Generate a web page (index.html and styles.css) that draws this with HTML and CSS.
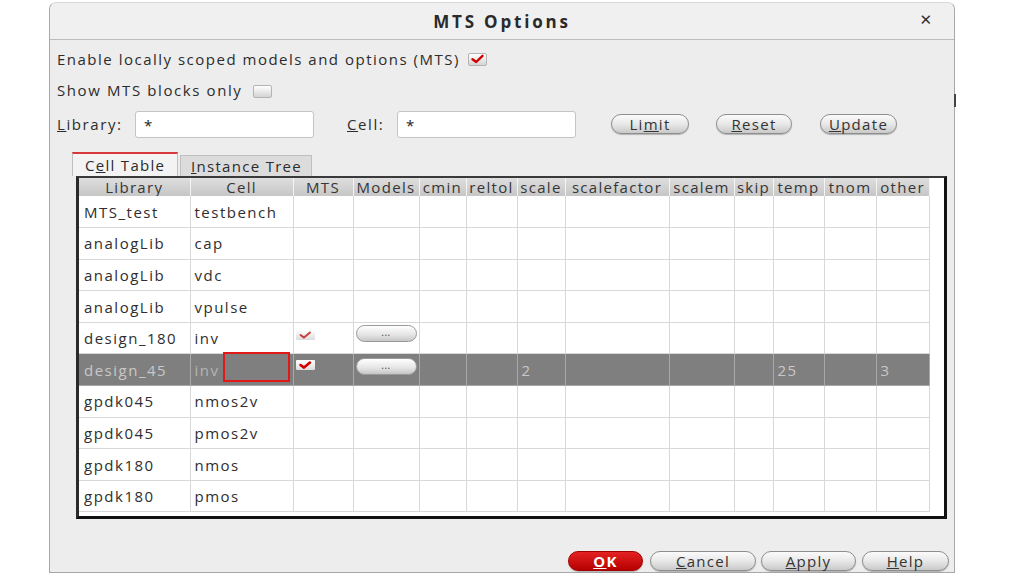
FILE: index.html
```html
<!DOCTYPE html>
<html>
<head>
<meta charset="utf-8">
<title>MTS Options</title>
<link rel="stylesheet" href="styles.css">
</head>
<body>
<div class="dialog">
  <div class="titlebar">
    <span class="title">MTS Options</span>
    <span class="close">&#x2715;</span>
  </div>
  <div class="content">
    <div class="row row-enable">
      <span class="label">Enable locally scoped models and options (MTS)</span>
      <span class="check checked"><svg viewBox="0 0 17 12" width="17" height="12"><path d="M3.5 6.2 L7.2 9 L13.5 2.8" fill="none" stroke="#d40000" stroke-width="2.4" stroke-linecap="round" stroke-linejoin="round"/></svg></span>
    </div>
    <div class="row row-show">
      <span class="label">Show MTS blocks only</span>
      <span class="check"></span>
    </div>
    <div class="row row-filter">
      <span class="label lib-label"><u>L</u>ibrary:</span>
      <span class="input lib-input">*</span>
      <span class="label cell-label"><u>C</u>ell:</span>
      <span class="input cell-input">*</span>
      <span class="btn btn-limit">Li<u>m</u>it</span>
      <span class="btn btn-reset"><u>R</u>eset</span>
      <span class="btn btn-update"><u>U</u>pdate</span>
    </div>
    <div class="tabs">
      <span class="tab active">C<u>e</u>ll Table</span>
      <span class="tab"><u>I</u>nstance Tree</span>
    </div>
    <div class="frame">
      <table class="grid">
        <colgroup>
          <col style="width:111px"><col style="width:103px"><col style="width:60px"><col style="width:66px"><col style="width:47px"><col style="width:51px"><col style="width:48px"><col style="width:104px"><col style="width:65px"><col style="width:39px"><col style="width:51px"><col style="width:52px"><col style="width:53px">
        </colgroup>
        <thead>
          <tr><th>Library</th><th>Cell</th><th>MTS</th><th>Models</th><th>cmin</th><th>reltol</th><th>scale</th><th>scalefactor</th><th>scalem</th><th>skip</th><th>temp</th><th>tnom</th><th>other</th></tr>
        </thead>
        <tbody>
          <tr><td>MTS_test</td><td>testbench</td><td></td><td></td><td></td><td></td><td></td><td></td><td></td><td></td><td></td><td></td><td></td></tr>
          <tr><td>analogLib</td><td>cap</td><td></td><td></td><td></td><td></td><td></td><td></td><td></td><td></td><td></td><td></td><td></td></tr>
          <tr><td>analogLib</td><td>vdc</td><td></td><td></td><td></td><td></td><td></td><td></td><td></td><td></td><td></td><td></td><td></td></tr>
          <tr><td>analogLib</td><td>vpulse</td><td></td><td></td><td></td><td></td><td></td><td></td><td></td><td></td><td></td><td></td><td></td></tr>
          <tr><td>design_180</td><td>inv</td><td class="mts"><span class="mini-check"><svg viewBox="0 0 19 10" width="19" height="10"><path d="M4.5 5 L8 7.6 L14 2.6" fill="none" stroke="#c84040" stroke-width="2" stroke-linecap="round" stroke-linejoin="round"/></svg></span></td><td class="models"><span class="dots">...</span></td><td></td><td></td><td></td><td></td><td></td><td></td><td></td><td></td><td></td></tr>
          <tr class="selected"><td>design_45</td><td class="cell-edit">inv<span class="editor"></span></td><td class="mts"><span class="mini-check strong"><svg viewBox="0 0 19 10" width="19" height="10"><path d="M4.5 5 L8 7.6 L14 2.6" fill="none" stroke="#d40000" stroke-width="2.6" stroke-linecap="round" stroke-linejoin="round"/></svg></span></td><td class="models"><span class="dots">...</span></td><td></td><td></td><td>2</td><td></td><td></td><td></td><td>25</td><td></td><td>3</td></tr>
          <tr><td>gpdk045</td><td>nmos2v</td><td></td><td></td><td></td><td></td><td></td><td></td><td></td><td></td><td></td><td></td><td></td></tr>
          <tr><td>gpdk045</td><td>pmos2v</td><td></td><td></td><td></td><td></td><td></td><td></td><td></td><td></td><td></td><td></td><td></td></tr>
          <tr><td>gpdk180</td><td>nmos</td><td></td><td></td><td></td><td></td><td></td><td></td><td></td><td></td><td></td><td></td><td></td></tr>
          <tr><td>gpdk180</td><td>pmos</td><td></td><td></td><td></td><td></td><td></td><td></td><td></td><td></td><td></td><td></td><td></td></tr>
        </tbody>
      </table>
    </div>
    <div class="footer">
      <span class="btn btn-ok"><u>O</u>K</span>
      <span class="btn btn-cancel"><u>C</u>ancel</span>
      <span class="btn btn-apply"><u>A</u>pply</span>
      <span class="btn btn-help"><u>H</u>elp</span>
    </div>
  </div>
  <span class="edge-mark"></span>
</div>
</body>
</html>
```

FILE: styles.css
```css
html, body {
  margin: 0;
  padding: 0;
  background: #ffffff;
}

body {
  font-family: "Open Sans", "DejaVu Sans", sans-serif;
  font-size: 15px;
  color: #2c2c2c;
}

.dialog {
  position: relative;
  box-sizing: border-box;
  margin: 2px 0 0 49px;
  width: 906px;
  height: 571px;
  background: #ededed;
  border: 1px solid #a8a8a8;
  border-top-color: #d8d8d8;
  border-radius: 7px 7px 0 0;
}

.titlebar {
  box-sizing: border-box;
  height: 37px;
  display: flex;
  align-items: center;
  justify-content: center;
  position: relative;
  background: #f0f0f0;
  border-bottom: 1px solid #bdbdbd;
  border-radius: 7px 7px 0 0;
}

.title {
  font-weight: 700;
  font-size: 17px;
  letter-spacing: 2.8px;
  color: #2a2a2a;
}

.close {
  position: absolute;
  right: 22px;
  top: 8px;
  font-size: 15px;
  font-weight: 700;
  color: #333;
  font-family: "DejaVu Sans", sans-serif;
  letter-spacing: 0;
}

.content {
  padding: 0 0 0 7px;
}

.row {
  display: flex;
  align-items: center;
  letter-spacing: 1.6px;
}

.row-enable {
  height: 20px;
  margin-top: 9px;
  letter-spacing: 1.5px;
}

.row-show {
  height: 20px;
  margin-top: 11px;
}

.row-filter {
  height: 28px;
  margin-top: 10px;
}

.check {
  display: inline-flex;
  align-items: center;
  justify-content: center;
  box-sizing: border-box;
  width: 19px;
  height: 13px;
  margin-left: 8px;
  background: linear-gradient(#ffffff, #d4d4d4);
  border: 1px solid #b4b4b4;
  border-radius: 2px;
}

.row-show .check {
  margin-left: 11px;
  margin-top: 3px;
}

.lib-label { width: 78px; }

.input {
  box-sizing: border-box;
  height: 27px;
  background: #ffffff;
  border: 1px solid #c4c4c4;
  border-radius: 3px;
  padding: 3px 0 0 8px;
  color: #222;
  letter-spacing: 0;
}

.lib-input { width: 179px; }

.cell-label {
  margin-left: 33px;
  width: 50px;
}

.cell-input { width: 179px; }

.btn {
  display: inline-flex;
  align-items: center;
  justify-content: center;
  box-sizing: border-box;
  height: 20px;
  border-radius: 10px;
  border: 1px solid #8e8e8e;
  background: linear-gradient(#fbfbfb 0%, #e8e8e8 50%, #c9c9c9 100%);
  box-shadow: 0 1px 1px rgba(0,0,0,0.25);
  color: #333;
  font-size: 15px;
  letter-spacing: 1.3px;
}

.btn-limit { width: 78px; margin-left: 35px; }
.btn-reset { width: 76px; margin-left: 27px; }
.btn-update { width: 77px; margin-left: 28px; }

.tabs {
  display: flex;
  align-items: flex-end;
  height: 24px;
  margin-top: 14px;
  padding-left: 15px;
}

.tab {
  box-sizing: border-box;
  display: inline-flex;
  align-items: center;
  height: 21px;
  padding: 0 0 0 10px;
  width: 132px;
  margin-left: 2px;
  background: #dcdcdc;
  border: 1px solid #c0c0c0;
  border-bottom: none;
  letter-spacing: 1.3px;
  font-size: 15px;
}

.tab.active {
  height: 24px;
  width: 106px;
  margin-left: 0;
  padding-left: 12px;
  background: #f3f3f3;
  border-top: 2px solid #d9383a;
}

.frame {
  box-sizing: border-box;
  margin-left: 19px;
  width: 871px;
  height: 343px;
  background: #ffffff;
  border-top: 2px solid #3a3a3a;
  border-left: 3px solid #2a2a2a;
  border-right: 3px solid #111111;
  border-bottom: 3px solid #111111;
}

.grid {
  border-collapse: collapse;
  table-layout: fixed;
  width: 849px;
  letter-spacing: 1.5px;
}

.grid thead tr {
  height: 18px;
}

.grid th {
  padding: 0;
  font-weight: 400;
  font-size: 15px;
  color: #363636;
  background: linear-gradient(#dedede, #c6c6c6);
  border-right: 1px solid #f4f4f4;
  text-align: center;
  line-height: 18px;
  white-space: nowrap;
  overflow: hidden;
  letter-spacing: 1.3px;
}

.grid tbody tr {
  height: 31.6px;
}

.grid td {
  padding: 0 0 0 4px;
  border: 1px solid #d8d8d8;
  border-top: none;
  line-height: 28px;
  font-size: 15px;
  color: #2e2e2e;
  white-space: nowrap;
  overflow: hidden;
  position: relative;
}

.grid td:first-child {
  border-left: none;
  padding-left: 5px;
}

.grid tr.selected td {
  background: #7f7f7f;
  color: #c8c8c8;
  border-color: #a8a8a8;
}

.grid tr.selected td.cell-edit {
  color: #b4b4b4;
  overflow: visible;
}

.grid td.mts,
.grid td.models {
  vertical-align: top;
  padding: 0 0 0 2px;
}

.mini-check {
  display: flex;
  align-items: center;
  justify-content: center;
  width: 19px;
  height: 10px;
  margin-top: 7px;
  background: linear-gradient(#ffffff, #dcdcdc);
  border-radius: 1px;
}

.mini-check.strong {
  margin-top: 6px;
}

.dots {
  display: flex;
  align-items: center;
  justify-content: center;
  box-sizing: border-box;
  width: 61px;
  height: 17px;
  margin-top: 2px;
  border-radius: 9px;
  border: 1px solid #9a9a9a;
  background: linear-gradient(#ffffff, #e4e4e4 60%, #c6c6c6);
  color: #444;
  font-size: 10px;
  letter-spacing: 0.5px;
  line-height: 10px;
  padding-bottom: 3px;
}

.grid tr.selected td.models .dots {
  margin-top: 4px;
}

.editor {
  position: absolute;
  left: 32px;
  top: -2px;
  width: 67px;
  height: 30px;
  box-sizing: border-box;
  border: 2px solid #e01818;
}

.footer {
  display: flex;
  justify-content: flex-end;
  margin-top: 32px;
  padding-right: 5px;
}

.footer .btn {
  height: 20px;
}

.btn-ok {
  width: 75px;
  background: linear-gradient(#e42222, #b60000);
  border-color: #a00000;
  color: #ffffff;
  font-weight: 700;
}

.btn-cancel { width: 106px; margin-left: 7px; }
.btn-apply { width: 95px; margin-left: 5px; }
.btn-help { width: 87px; margin-left: 6px; }

.edge-mark {
  position: absolute;
  right: -2px;
  top: 91px;
  width: 2px;
  height: 13px;
  background: #444;
}
```
